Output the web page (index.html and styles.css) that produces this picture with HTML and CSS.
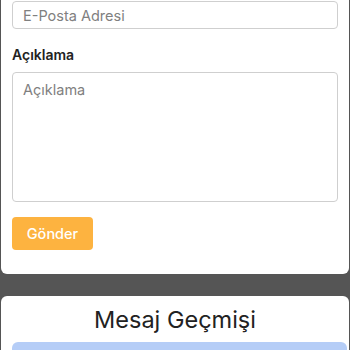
FILE: index.html
```html
<!DOCTYPE html>
<html lang="tr">
<head>
<meta charset="utf-8">
<link rel="stylesheet" href="styles.css">
</head>
<body>
<div class="page">
  <section class="card form-card">
    <div class="input">E-Posta Adresi</div>
    <div class="label">Açıklama</div>
    <div class="textarea">Açıklama</div>
    <div class="button">Gönder</div>
  </section>
  <section class="card history-card">
    <h2 class="title">Mesaj Geçmişi</h2>
    <div class="message"></div>
  </section>
</div>
</body>
</html>
```
FILE: styles.css
```css
html, body {
  margin: 0;
  padding: 0;
  background: #555555;
  font-family: Inter, "Liberation Sans", Arial, sans-serif;
  overflow: hidden;
}
.page {
  padding: 0 1px;
  display: flex;
  flex-direction: column;
  gap: 22px;
}
.card {
  background: #ffffff;
  border-radius: 6px;
}
.form-card {
  border-radius: 0 0 6px 6px;
  padding: 1px 11px 24px 11px;
  display: flex;
  flex-direction: column;
  align-items: flex-start;
}
.input {
  box-sizing: border-box;
  width: 100%;
  height: 28px;
  border: 1px solid #cfcfcf;
  border-radius: 4px;
  padding: 0 10px;
  line-height: 27px;
  font-size: 14.5px;
  color: #808080;
}
.label {
  margin-top: 17px;
  line-height: 18px;
  font-size: 14px;
  font-weight: 600;
  color: #222222;
}
.textarea {
  box-sizing: border-box;
  width: 100%;
  height: 130px;
  margin-top: 8px;
  border: 1px solid #cfcfcf;
  border-radius: 4px;
  padding: 8px 10px;
  font-size: 14.5px;
  line-height: 18px;
  color: #808080;
}
.button {
  margin-top: 15px;
  box-sizing: border-box;
  width: 81px;
  height: 33px;
  border-radius: 4px;
  background: #fdb340;
  color: #ffffff;
  font-size: 14.5px;
  font-weight: 500;
  display: flex;
  align-items: center;
  justify-content: center;
}
.history-card {
  padding: 10px 2px 0 11px;
  height: 60px;
  overflow: hidden;
}
.title {
  margin: 0;
  text-align: center;
  font-size: 23.5px;
  font-weight: normal;
  line-height: 28px;
  color: #222222;
  padding-right: 9px;
}
.message {
  margin-top: 8px;
  height: 40px;
  background: #b5cdf7;
  border-radius: 6px 6px 0 0;
}
```
